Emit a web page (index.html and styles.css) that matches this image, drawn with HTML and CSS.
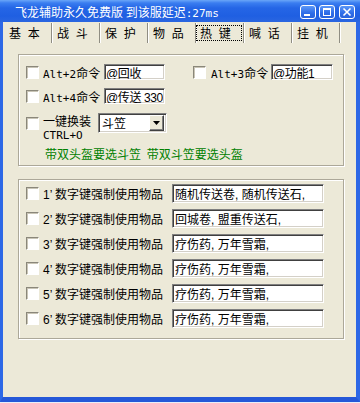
FILE: index.html
```html
<!DOCTYPE html>
<html>
<head>
<meta charset="UTF-8">
<title>飞龙辅助</title>
<link rel="stylesheet" href="styles.css">
</head>
<body>
<div class="window">
   <div class="titlebar">
      <div class="title">飞龙辅助永久免费版 到该服延迟<span class="mono">:27ms</span></div>
      <div class="tb-btn">
         <svg width="14" height="12" viewBox="0 0 14 12"><rect x="3" y="8" width="6" height="2" fill="#fff"/></svg>
      </div>
      <div class="tb-btn">
         <svg width="14" height="12" viewBox="0 0 14 12"><rect x="3.5" y="2.5" width="7" height="7" fill="none" stroke="#fff"/><rect x="3" y="2" width="8" height="2" fill="#fff"/></svg>
      </div>
      <div class="tb-btn close">
         <svg width="14" height="12" viewBox="0 0 14 12"><path d="M3.5 2.5 L10.5 9.5 M10.5 2.5 L3.5 9.5" stroke="#fff" stroke-width="1.6"/></svg>
      </div>
   </div>

   <div class="frame">
      <div class="tabs">
         <div class="tab">基 本</div>
         <div class="tab">战 斗</div>
         <div class="tab">保 护</div>
         <div class="tab">物 品</div>
         <div class="tab active"><span class="focus">热 键</span></div>
         <div class="tab">喊 话</div>
         <div class="tab">挂 机</div>
      </div>

      <div class="group group-top">
         <div class="row">
            <input type="checkbox" class="cb">
            <span class="lbl"><span class="mono">Alt+2</span>命令</span>
            <input type="text" class="field short" value="@回收">
            <input type="checkbox" class="cb cb-right">
            <span class="lbl lbl-right"><span class="mono">Alt+3</span>命令</span>
            <input type="text" class="field short wide" value="@功能1">
         </div>
         <div class="row">
            <input type="checkbox" class="cb">
            <span class="lbl"><span class="mono">Alt+4</span>命令</span>
            <input type="text" class="field short" value="@传送 330">
         </div>
         <div class="row row-combo">
            <input type="checkbox" class="cb">
            <span class="lbl two-line">一键换装<br><span class="mono">CTRL+O</span></span>
            <div class="combo">
               <span class="combo-text">斗笠</span>
               <span class="combo-btn">
                  <svg width="7" height="4" viewBox="0 0 7 4"><path d="M0 0 H7 L3.5 4 Z" fill="#000"/></svg>
               </span>
            </div>
         </div>
         <div class="note">带双头盔要选斗笠 带双斗笠要选头盔</div>
      </div>

      <div class="group group-items">
         <div class="row item">
            <input type="checkbox" class="cb">
            <span class="lbl-item"><span class="num">1’</span>数字键强制使用物品</span>
            <input type="text" class="field long" value="随机传送卷, 随机传送石,">
         </div>
         <div class="row item">
            <input type="checkbox" class="cb">
            <span class="lbl-item"><span class="num">2’</span>数字键强制使用物品</span>
            <input type="text" class="field long" value="回城卷, 盟重传送石,">
         </div>
         <div class="row item">
            <input type="checkbox" class="cb">
            <span class="lbl-item"><span class="num">3’</span>数字键强制使用物品</span>
            <input type="text" class="field long" value="疗伤药, 万年雪霜,">
         </div>
         <div class="row item">
            <input type="checkbox" class="cb">
            <span class="lbl-item"><span class="num">4’</span>数字键强制使用物品</span>
            <input type="text" class="field long" value="疗伤药, 万年雪霜,">
         </div>
         <div class="row item">
            <input type="checkbox" class="cb">
            <span class="lbl-item"><span class="num">5’</span>数字键强制使用物品</span>
            <input type="text" class="field long" value="疗伤药, 万年雪霜,">
         </div>
         <div class="row item">
            <input type="checkbox" class="cb">
            <span class="lbl-item"><span class="num">6’</span>数字键强制使用物品</span>
            <input type="text" class="field long" value="疗伤药, 万年雪霜,">
         </div>
      </div>
   </div>
</div>
</body>
</html>
```

FILE: styles.css
```css
* {
   box-sizing: border-box;
}

html, body {
   margin: 0;
   padding: 0;
}

body {
   width: 360px;
   height: 403px;
   overflow: hidden;
   background: #e8eef8;
   font-family: "Noto Sans CJK SC", sans-serif;
   font-size: 12px;
   color: #000;
}

.mono {
   font-family: "DejaVu Sans Mono", "Liberation Mono", monospace;
   font-size: 11px;
}

.window {
   width: 360px;
   height: 402px;
   display: flex;
   flex-direction: column;
}

/* title bar */
.titlebar {
   height: 22px;
   flex: none;
   display: flex;
   align-items: center;
   padding: 1px 5px 0 15px;
   color: #fff;
   background: linear-gradient(to bottom, #6aa6f8 0, #3a7df0 3px, #2566e6 8px, #1f5fe2 16px, #2a66e0 22px);
}

.title {
   flex: 1;
   line-height: 14px;
   padding-top: 2px;
   white-space: nowrap;
}

.title .mono {
   font-size: 11px;
}

.tb-btn {
   width: 16px;
   height: 14px;
   margin-left: 3px;
   border: 1px solid #fff;
   border-radius: 3px;
   background: linear-gradient(to bottom, #5b97f7, #2d6ce8 60%, #2a63dc);
   display: flex;
   align-items: center;
   justify-content: center;
}

.tb-btn.close {
   margin-left: 4px;
}

/* frame */
.frame {
   flex: 1;
   background: #ece9d8;
   border-left: 3px solid #2d68e6;
   border-right: 4px solid #2d68e6;
   border-bottom: 5px solid #2558d8;
   padding-top: 1px;
}

.tabs {
   display: flex;
   height: 20px;
   margin-left: 1px;
}

.tab {
   width: 48px;
   height: 20px;
   line-height: 20px;
   padding-left: 5px;
   word-spacing: 4px;
   border-right: 1px solid #8f8d82;
   box-shadow: 1px 0 0 #fff;
   white-space: nowrap;
}

.tab.active {
   padding: 2px 1px 2px 0;
}

.tab.active .focus {
   display: block;
   height: 16px;
   line-height: 14px;
   padding-left: 3px;
   border: 1px dotted #000;
}

/* group boxes */
.group {
   width: 326px;
   margin-left: 15px;
   border: 1px solid #aca899;
   box-shadow: inset 1px 1px 0 #fff, 1px 1px 0 #fff;
   padding-left: 7px;
}

.group-top {
   margin-top: 11px;
   height: 112px;
   padding-top: 9px;
}

.group-items {
   margin-top: 13px;
   height: 160px;
   padding-top: 4px;
}

.row {
   display: flex;
   align-items: center;
   height: 16px;
}

.row + .row {
   margin-top: 8px;
}

.cb {
   appearance: none;
   -webkit-appearance: none;
   width: 13px;
   height: 13px;
   margin: 0 4px 0 0;
   flex: none;
   background: #fff;
   border: 1px solid;
   border-color: #8a877a #fff #fff #8a877a;
   box-shadow: inset 1px 1px 0 #c9c5b6;
}

.cb-right {
   margin-left: 28px;
   margin-right: 5px;
}

.lbl {
   width: 61px;
   flex: none;
   white-space: nowrap;
}

.lbl-right {
   width: 60px;
}

.field {
   flex: none;
   height: 16px;
   padding: 0 1px 0 2px;
   margin: 0;
   font-family: "Liberation Sans", "Noto Sans CJK SC", sans-serif;
   font-size: 12px;
   color: #000;
   background: #fff;
   border: 1px solid;
   border-color: #808080 #fff #fff #808080;
   box-shadow: inset 1px 1px 0 #404040, inset -1px -1px 0 #d4d0c8;
   outline: none;
}

.field.short {
   width: 61px;
   padding-left: 1px;
   letter-spacing: -0.4px;
}

.field.wide {
   width: 62px;
}

.row-combo {
   margin-top: 9px;
   height: 28px;
   align-items: flex-start;
}

.row + .row-combo {
   margin-top: 9px;
}

.row-combo .cb {
   margin-top: 4px;
}

.two-line {
   width: 55px;
   line-height: 13px;
   margin-top: 1px;
}

.combo {
   width: 69px;
   height: 20px;
   display: flex;
   align-items: center;
   background: #fff;
   border: 1px solid;
   border-color: #808080 #fff #fff #808080;
   box-shadow: inset 1px 1px 0 #404040, inset -1px -1px 0 #d4d0c8;
   padding: 2px 2px 2px 3px;
}

.combo-text {
   flex: 1;
   line-height: 16px;
}

.combo-btn {
   width: 15px;
   height: 16px;
   display: flex;
   align-items: center;
   justify-content: center;
   background: #ece9d8;
   border: 1px solid;
   border-color: #fff #404040 #404040 #fff;
   box-shadow: inset -1px -1px 0 #808080;
}

.note {
   margin: 6px 0 0 19px;
   line-height: 14px;
   word-spacing: 3px;
   color: #008000;
   white-space: nowrap;
}

/* numbered item rows */
.item {
   height: 19px;
}

.row.item + .row.item {
   margin-top: 6px;
}

.lbl-item {
   width: 129px;
   flex: none;
   white-space: nowrap;
}

.num {
   display: inline-block;
   width: 12px;
   font-family: "Liberation Sans", sans-serif;
}

.field.long {
   width: 152px;
   height: 19px;
}
```
